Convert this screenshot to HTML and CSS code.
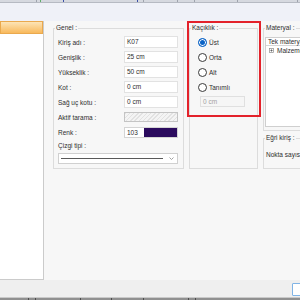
FILE: index.html
```html
<!DOCTYPE html>
<html lang="tr">
<head>
    <meta charset="UTF-8">
    <meta name="viewport" content="width=device-width, initial-scale=1.0">
    <title>Kiriş</title>
    <link rel="stylesheet" href="styles.css">
</head>
<body>
    <div class="ribbon">
        <span></span><span class="green"></span><span class="blue"></span><span class="blue"></span><span></span><span></span><span></span><span></span><span></span>
    </div>
    <div class="band"></div>

    <div class="main">
        <aside class="tree">
            <div class="tree-sel"></div>
        </aside>

        <section class="form">
            <fieldset class="group genel">
                <legend>Genel :</legend>
                <div class="rows">
                    <div class="row"><label>Kiriş adı :</label><div class="field">K07</div></div>
                    <div class="row"><label>Genişlik :</label><div class="field">25 cm</div></div>
                    <div class="row"><label>Yükseklik :</label><div class="field">50 cm</div></div>
                    <div class="row"><label>Kot :</label><div class="field">0 cm</div></div>
                    <div class="row"><label>Sağ uç kotu :</label><div class="field">0 cm</div></div>
                    <div class="row"><label>Aktif tarama :</label><div class="hatch"></div></div>
                    <div class="row"><label>Renk :</label><div class="color"><span class="num">103</span><span class="swatch"></span></div></div>
                    <div class="row short"><label>Çizgi tipi :</label></div>
                    <div class="combo">
                        <span class="line"></span>
                        <svg width="5" height="3" viewBox="0 0 5 3"><polyline points="0.5,0.5 2.5,2.5 4.5,0.5" fill="none" stroke="#8a8a8a" stroke-width="0.8"/></svg>
                    </div>
                </div>
            </fieldset>

            <fieldset class="group offset">
                <legend>Kaçıklık :</legend>
                <div class="opts">
                    <div class="radio on">Üst</div>
                    <div class="radio">Orta</div>
                    <div class="radio">Alt</div>
                    <div class="radio">Tanımlı</div>
                    <div class="field off">0 cm</div>
                </div>
            </fieldset>

            <div class="side">
                <fieldset class="group material">
                    <legend>Materyal :</legend>
                    <div class="list">
                        <div class="list-head">Tek materyal</div>
                        <div class="node">
                            <svg width="5" height="5" viewBox="0 0 5 5"><rect x="0.5" y="0.5" width="4" height="4" fill="#fff" stroke="#8c8c8c" stroke-width="0.7"/><path d="M1.3 2.5h2.4M2.5 1.3v2.4" stroke="#444" stroke-width="0.6"/></svg>
                            <span>Malzemeler</span>
                        </div>
                    </div>
                </fieldset>
                <fieldset class="group curve">
                    <legend>Eğri kiriş :</legend>
                    <div class="note">Nokta sayısı :</div>
                </fieldset>
            </div>

            <div class="highlight"></div>
        </section>
    </div>

    <div class="footer">
        <button class="btn"></button>
    </div>
    <div class="status">
        <span></span><span></span><span></span><span></span><span></span><span></span><span></span>
    </div>
</body>
</html>
```

FILE: styles.css
```css
* {
    box-sizing: border-box;
}
body {
    margin: 0;
    width: 300px;
    height: 300px;
    overflow: hidden;
    font-family: "Liberation Sans", Arial, sans-serif;
    font-size: 6.5px;
    color: #2e2e2e;
    background-color: #f7f7f7;
    white-space: nowrap;
}

/* faixa superior */
.ribbon {
    height: 3px;
    display: grid;
    grid-template-columns: 37px 4px 23px 74px 6px 34px 17px 43px 60px;
    background-color: #d6d9e0;
    border-bottom: 1px solid #b6bac3;
}
.ribbon span {
    border-right: 1px solid #9ea3ad;
}
.ribbon .green {
    border-right-color: #5fae6a;
}
.ribbon .blue {
    border-right-color: #3b4fa8;
}
.band {
    height: 18px;
    background-color: #eff1f8;
}

.main {
    display: flex;
    height: 259px;
}
.tree {
    width: 44px;
    flex-shrink: 0;
    background-color: #ffffff;
    border-right: 1px solid #cbcbcb;
    border-bottom: 1px solid #cbcbcb;
}
.tree-sel {
    height: 13px;
    background: linear-gradient(#fde4b6, #f8b95c);
    border: 1px solid #eaa94e;
}

.form {
    flex: 1;
    min-width: 0;
    position: relative;
    display: flex;
    align-items: flex-start;
    gap: 5px;
    padding: 3px 0 0 9px;
    overflow: hidden;
}

/* caixas de grupo */
.group {
    flex-shrink: 0;
    margin: 0;
    padding: 0;
    min-width: 0;
    border: 1px solid #dcdcdc;
}
.group legend {
    margin-left: 1px;
    padding: 0 1px;
    line-height: 8px;
}
.genel {
    width: 131px;
    height: 145px;
}
.offset {
    width: 69px;
    height: 145px;
}

.rows {
    display: flex;
    flex-direction: column;
    gap: 3px;
    padding: 4px 5px 0 4px;
}
.row {
    display: flex;
    align-items: center;
    justify-content: space-between;
    height: 12px;
}
.row.short {
    height: 9px;
}
.field {
    flex-shrink: 0;
    width: 54px;
    height: 12px;
    padding-left: 2px;
    line-height: 10px;
    background-color: #ffffff;
    border: 1px solid #e2e2e2;
}
.hatch {
    width: 54px;
    height: 10px;
    border: 1px solid #c4c4c4;
    background: repeating-linear-gradient(135deg, #e2e2e2 0 1px, #f4f4f4 1px 3px);
}
.color {
    display: flex;
    width: 54px;
    height: 11px;
    border: 1px solid #d4d4d4;
}
.color .num {
    width: 19px;
    padding-left: 2px;
    line-height: 9px;
    background-color: #ffffff;
}
.color .swatch {
    flex: 1;
    background-color: #2b0b5e;
}
.combo {
    display: flex;
    align-items: center;
    width: 120px;
    height: 11px;
    padding: 0 3px 0 2px;
    background-color: #ffffff;
    border: 1px solid #d0d0d0;
}
.combo .line {
    flex: 1;
    height: 1px;
    margin-right: 6px;
    background-color: #5a5a5a;
}

/* opções de rádio */
.opts {
    display: flex;
    flex-direction: column;
    gap: 3px;
    padding: 4px 0 0 8px;
}
.radio {
    display: flex;
    align-items: center;
    gap: 2px;
    height: 12px;
}
.radio::before {
    content: "";
    flex-shrink: 0;
    width: 7px;
    height: 7px;
    border: 1px solid #3a3a3a;
    border-radius: 50%;
    background-color: #ffffff;
}
.radio.on::before {
    border-color: #0b63c6;
    background-color: #0b63c6;
    box-shadow: inset 0 0 0 1px #ffffff;
}
.field.off {
    width: 45px;
    height: 11px;
    margin-left: 2px;
    padding-left: 2px;
    line-height: 9px;
    color: #a2a2a2;
    background-color: #f6f6f6;
    border-color: #e0e0e0;
}

/* coluna direita */
.side {
    display: flex;
    flex-direction: column;
    gap: 3px;
    width: 80px;
    flex-shrink: 0;
}
.material {
    height: 107px;
}
.list {
    height: 90px;
    margin: 5px 0 0 1px;
    background-color: #ffffff;
    border: 1px solid #cfcfcf;
}
.list-head {
    height: 8px;
    padding-left: 2px;
    line-height: 7px;
    border-bottom: 1px solid #d6d6d6;
}
.node {
    display: flex;
    align-items: center;
    gap: 3px;
    height: 9px;
    padding-left: 3px;
}
.curve {
    height: 35px;
}
.note {
    padding: 8px 0 0 2px;
    line-height: 10px;
}

/* destaque vermelho */
.highlight {
    position: absolute;
    left: 143px;
    top: 0;
    width: 74px;
    height: 96px;
    border: 2px solid #e3222b;
}

.footer {
    height: 17px;
    padding: 3px 0 0 292px;
    background-color: #efefef;
    overflow: hidden;
}
.btn {
    display: block;
    width: 60px;
    height: 13px;
    padding: 0;
    background-color: #ffffff;
    border: 1px solid #80b4e6;
    border-radius: 1px;
}
.status {
    height: 3px;
    display: grid;
    grid-template-columns: 29px 7px 45px 31px 32px 45px 7px;
    background-color: #909090;
    border-top: 1px solid #c9c9c9;
}
.status span {
    border-right: 1px solid #4c4c4c;
}
```
